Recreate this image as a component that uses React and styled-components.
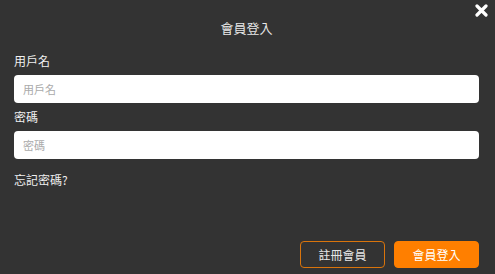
import React from 'react';
import styled, { createGlobalStyle } from 'styled-components';

const GlobalStyle = createGlobalStyle`
  html, body {
    margin: 0;
    padding: 0;
    background: #333333;
  }
  * {
    box-sizing: border-box;
  }
`;

const Modal = styled.div`
  position: relative;
  width: 495px;
  height: 274px;
  background: #333333;
  padding: 0 16px 6px 14px;
  display: flex;
  flex-direction: column;
  font-family: "Noto Sans CJK TC", "Noto Sans", sans-serif;
  color: #eeeeee;
`;

const Title = styled.h1`
  margin: 0;
  padding-top: 19px;
  font-size: 13px;
  line-height: 18px;
  font-weight: 400;
  text-align: center;
  color: #e8e8e8;
`;

const Close = styled.button`
  position: absolute;
  top: 4px;
  right: 7px;
  width: 13px;
  height: 13px;
  padding: 0;
  border: 0;
  background: none;
  cursor: pointer;
  display: flex;
`;

const Field = styled.div`
  display: flex;
  flex-direction: column;
  gap: 6px;
  margin-top: ${(p) => p.$top}px;
`;

const Label = styled.label`
  font-size: 12px;
  line-height: 16px;
  color: #f0f0f0;
`;

const Input = styled.input`
  width: 100%;
  height: 28px;
  border: 0;
  border-radius: 4px;
  background: #ffffff;
  padding: 0 9px;
  font-family: inherit;
  font-size: 11px;
  color: #333;
  outline: none;
  &::placeholder {
    color: #aaaaaa;
  }
`;

const Forgot = styled.a`
  margin-top: 13px;
  font-size: 12px;
  line-height: 16px;
  color: #eeeeee;
  text-decoration: none;
  cursor: pointer;
`;

const Actions = styled.div`
  margin-top: auto;
  display: flex;
  justify-content: flex-end;
  gap: 9px;
`;

const Button = styled.button`
  width: 85px;
  height: 27px;
  border-radius: 4px;
  font-family: inherit;
  font-size: 12px;
  cursor: pointer;
  border: 1px solid ${(p) => (p.$primary ? '#ff7f00' : '#d9740c')};
  background: ${(p) => (p.$primary ? '#ff7f00' : 'transparent')};
  color: ${(p) => (p.$primary ? '#ffffff' : '#e6e6e6')};
`;

const CloseIcon = () => (
  <svg width="13" height="13" viewBox="0 0 13 13">
    <path d="M2 2 L11 11 M11 2 L2 11" stroke="#ffffff" strokeWidth="3.2" strokeLinecap="round" />
  </svg>
);

export default function App() {
  return (
    <>
      <GlobalStyle />
      <Modal>
        <Close aria-label="close">
          <CloseIcon />
        </Close>
        <Title>會員登入</Title>
        <Field $top={16}>
          <Label>用戶名</Label>
          <Input placeholder="用戶名" />
        </Field>
        <Field $top={6}>
          <Label>密碼</Label>
          <Input type="password" placeholder="密碼" />
        </Field>
        <Forgot>忘記密碼?</Forgot>
        <Actions>
          <Button>註冊會員</Button>
          <Button $primary>會員登入</Button>
        </Actions>
      </Modal>
    </>
  );
}
